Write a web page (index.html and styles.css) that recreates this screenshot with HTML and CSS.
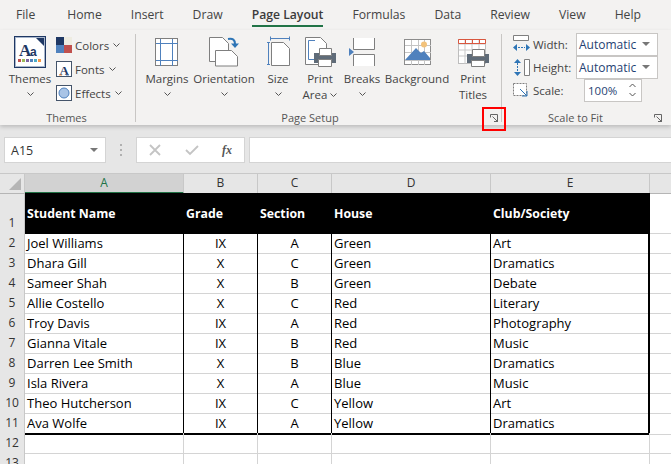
FILE: index.html
```html
<!DOCTYPE html>
<html lang="en">
<head>
<meta charset="utf-8">
<title>Page Layout</title>
<link rel="stylesheet" href="styles.css">
</head>
<body>
<nav class="tabs">
  <span class="tab tab-file">File</span><span class="tab">Home</span><span class="tab">Insert</span><span class="tab">Draw</span>
  <span class="tab active">Page Layout</span><span class="tab">Formulas</span><span class="tab">Data</span><span class="tab">Review</span><span class="tab">View</span><span class="tab">Help</span>
</nav>
<section class="ribbon">
  <div class="group g-themes">
    <div class="group-body themes-body">
      <div class="big w-themes">
        <svg class="ico" width="32" height="32" viewBox="0 0 32 32"><rect x=".5" y=".5" width="31" height="31" fill="#fff" stroke="#1f3864"/><rect x="1.5" y="1.5" width="29" height="29" fill="#fff" stroke="#a9b7cc"/><path d="M22 2h8v8z" fill="#1f3864"/><text x="5" y="20" class="aa1">A</text><text x="16" y="20" class="aa2">a</text><path d="M4 23h3v3H4z" fill="#c0504d"/><path d="M8 23h3v3H8z" fill="#9bbb59"/><path d="M12 23h3v3h-3z" fill="#8064a2"/><path d="M16 23h3v3h-3z" fill="#4f81bd"/><path d="M20 23h3v3h-3z" fill="#4bacc6"/><path d="M24 23h3v3h-3z" fill="#f79646"/></svg>
        <span class="big-label">Themes</span>
        <svg class="chev" width="7" height="4" viewBox="0 0 7 4"><path d="M.5.5l3 3 3-3" fill="none" stroke="#555"/></svg>
      </div>
      <div class="small-col">
        <div class="small"><svg width="16" height="16" viewBox="0 0 16 16"><path d="M0 0h8v8H0z" fill="#1f3864"/><path d="M8 0h8v8H8z" fill="#eeece1"/><path d="M0 8h8v8H0z" fill="#4f81bd"/><path d="M8 8h8v8H8z" fill="#c0504d"/></svg><span>Colors</span><svg class="chev" width="7" height="4" viewBox="0 0 7 4"><path d="M.5.5l3 3 3-3" fill="none" stroke="#555"/></svg></div>
        <div class="small"><svg width="16" height="16" viewBox="0 0 16 16"><rect x=".5" y=".5" width="15" height="15" fill="#fff" stroke="#44546a"/><text x="3.500" y="13.500" class="fonta">A</text><path d="M3 14h3" stroke="#f79646"/><path d="M10 14h3" stroke="#4f81bd"/></svg><span>Fonts</span><svg class="chev" width="7" height="4" viewBox="0 0 7 4"><path d="M.5.5l3 3 3-3" fill="none" stroke="#555"/></svg></div>
        <div class="small"><svg width="16" height="16" viewBox="0 0 16 16"><rect x=".5" y=".5" width="15" height="15" fill="#fff" stroke="#44546a"/><circle cx="8" cy="8" r="5" fill="#a9c4e6" stroke="#4f81bd"/></svg><span>Effects</span><svg class="chev" width="7" height="4" viewBox="0 0 7 4"><path d="M.5.5l3 3 3-3" fill="none" stroke="#555"/></svg></div>
      </div>
    </div>
    <div class="group-label">Themes</div>
  </div>

  <div class="group g-setup">
    <div class="group-body setup-body">
      <div class="big w-margins">
        <svg class="ico" width="24" height="32" viewBox="0 0 24 32"><rect x=".5" y="2.500" width="22" height="27" fill="#fff" stroke="#7f7f7f"/><path d="M5.500 3v27M17.500 3v27M1 7.500h22M1 24.500h22" stroke="#4f81bd" fill="none"/></svg>
        <span class="big-label">Margins</span>
        <svg class="chev" width="7" height="4" viewBox="0 0 7 4"><path d="M.5.5l3 3 3-3" fill="none" stroke="#555"/></svg>
      </div>
      <div class="big w-orient">
        <svg class="ico" width="30" height="32" viewBox="0 0 30 32"><path d="M.5 1.500h13l6 6v18H.5z" fill="#fff" stroke="#7f7f7f"/><path d="M6.500 14.500h16l6 6v9.500h-22z" fill="#fff" stroke="#7f7f7f"/><path d="M19 3c5-1 7 1 7 5" fill="none" stroke="#2e75b6" stroke-width="2"/><path d="M22 7.500h8l-4 4.500z" fill="#2e75b6"/></svg>
        <span class="big-label">Orientation</span>
        <svg class="chev" width="7" height="4" viewBox="0 0 7 4"><path d="M.5.5l3 3 3-3" fill="none" stroke="#555"/></svg>
      </div>
      <div class="big w-size">
        <svg class="ico" width="23" height="32" viewBox="0 0 23 32"><path d="M3.500 2.500h19M3.500.5v4M22.500.5v4M0 6.500h3M0 28.500h3M1.500 6.500v22" fill="none" stroke="#4f81bd"/><path d="M4.500 6.500h12l6 6v17h-18z" fill="#fff" stroke="#7f7f7f"/></svg>
        <span class="big-label">Size</span>
        <svg class="chev" width="7" height="4" viewBox="0 0 7 4"><path d="M.5.5l3 3 3-3" fill="none" stroke="#555"/></svg>
      </div>
      <div class="big w-print">
        <svg class="ico" width="31" height="32" viewBox="0 0 31 32"><path d="M.5 1.500h15l6 6v21H.5z" fill="#fff" stroke="#7f7f7f"/><path d="M10 4.500H3.500v19H10" fill="none" stroke="#4f81bd"/><path d="M9 17h22v10H9z" fill="#5f6b78"/><path d="M14.500 12.500h12v7h-12z" fill="#fff" stroke="#7f7f7f"/><path d="M13.500 23.500h13v7h-13z" fill="#fff" stroke="#7f7f7f"/></svg>
        <span class="big-label">Print</span>
        <span class="big-label">Area<svg class="chev inl" width="7" height="4" viewBox="0 0 7 4"><path d="M.5.5l3 3 3-3" fill="none" stroke="#555"/></svg></span>
      </div>
      <div class="big w-breaks">
        <svg class="ico" width="26" height="32" viewBox="0 0 26 32"><path d="M4.500 2v11.500h21V2" fill="#fff" stroke="#7f7f7f"/><path d="M4.500 30v-11.500h21V30" fill="#fff" stroke="#7f7f7f"/><path d="M0 12l5 4-5 4z" fill="#4f81bd"/></svg>
        <span class="big-label">Breaks</span>
        <svg class="chev" width="7" height="4" viewBox="0 0 7 4"><path d="M.5.5l3 3 3-3" fill="none" stroke="#555"/></svg>
      </div>
      <div class="big w-bg">
        <svg class="ico" width="27" height="32" viewBox="0 0 27 32"><rect x=".5" y="3.500" width="26" height="25" fill="#fff" stroke="#8c8c8c"/><path d="M1 9.500h26M1 16.500h26M1 24.500h26M7.500 4v25M14.500 4v25M20.500 4v25" stroke="#c4c4c4"/><circle cx="20" cy="8.500" r="3" fill="#f2c27b"/><path d="M1 24l11-12 5 5 3-2 6 7v2H1z" fill="#4f81bd"/></svg>
        <span class="big-label">Background</span>
      </div>
      <div class="big w-titles">
        <svg class="ico" width="31" height="32" viewBox="0 0 31 32"><rect x=".5" y="3.500" width="27" height="24" fill="#fff" stroke="#bdbdbd"/><path d="M1 8h27M7 4v24M14 4v24M21 4v24M1 14h27M1 20h27" stroke="#c9c9c9"/><path d="M.5 3.500h27v4H.5zM7.500 3.500v4M14.500 3.500v4M21.500 3.500v4" fill="none" stroke="#d9573f"/><path d="M9 18h22v9H9z" fill="#5f6b78"/><path d="M14.500 13.500h12v7h-12z" fill="#fff" stroke="#7f7f7f"/><path d="M13.500 24.500h13v6h-13z" fill="#fff" stroke="#7f7f7f"/></svg>
        <span class="big-label">Print</span>
        <span class="big-label">Titles</span>
      </div>
    </div>
    <div class="group-label label-setup">Page Setup
      <svg class="launcher" width="8" height="8" viewBox="0 0 8 8"><path d="M.5 3.500V.5h7v7h-3.500M2.500 2.500l5 5M7.500 4v3.500H4" fill="none" stroke="#666"/></svg>
    </div>
  </div>

  <div class="group g-scale">
    <div class="group-body scale-body">
      <div class="scale-row">
        <svg width="17" height="18" viewBox="0 0 17 18"><path d="M.5.500h15v5H.5z" fill="#fff" stroke="#7f7f7f"/><path d="M5 12.500h7" stroke="#2e75b6" stroke-dasharray="2 1"/><path d="M0 12.500l4-3.500v7zM17 12.500l-4-3.500v7z" fill="#2e75b6"/></svg>
        <span class="scale-label">Width:</span>
        <div class="select"><span>Automatic</span><i class="caret"></i></div>
      </div>
      <div class="scale-row">
        <svg width="17" height="17" viewBox="0 0 17 17"><path d="M11.500.5h5v16h-5z" fill="#fff" stroke="#7f7f7f"/><path d="M4.500 4v9" stroke="#2e75b6" stroke-dasharray="2 1"/><path d="M4.500 0l3.500 4H1zM4.500 17l3.500-4H1z" fill="#2e75b6"/></svg>
        <span class="scale-label">Height:</span>
        <div class="select"><span>Automatic</span><i class="caret"></i></div>
      </div>
      <div class="scale-row">
        <svg width="17" height="17" viewBox="0 0 17 17"><path d="M.5 1.500h13v12H.5z" fill="#fff" stroke="#7f7f7f" stroke-dasharray="2 1"/><path d="M7 7l7 7M14 9v5H9" fill="none" stroke="#2e75b6"/></svg>
        <span class="scale-label">Scale:</span>
        <div class="spin"><span>100%</span><svg width="7" height="14" viewBox="0 0 7 14"><path d="M.5 4l3-3 3 3M.5 10l3 3 3-3" fill="none" stroke="#555"/></svg></div>
      </div>
    </div>
    <div class="group-label label-scale">Scale to Fit
      <svg class="launcher" width="8" height="8" viewBox="0 0 8 8"><path d="M.5 3.500V.5h7v7h-3.500M2.500 2.500l5 5M7.500 4v3.500H4" fill="none" stroke="#666"/></svg>
    </div>
  </div>
</section>

<section class="formula">
  <div class="namebox"><span>A15</span><i class="caret"></i></div>
  <div class="grip"><i></i><i></i><i></i></div>
  <div class="fx-box">
    <svg width="12" height="12" viewBox="0 0 12 12"><path d="M1 1l10 10M11 1L1 11" stroke="#c4c4c4" stroke-width="1.800"/></svg>
    <svg width="14" height="12" viewBox="0 0 14 12"><path d="M1 6l4 4 8-8" fill="none" stroke="#c4c4c4" stroke-width="1.800"/></svg>
    <span class="fx">fx</span>
  </div>
  <div class="fx-input"></div>
</section>

<section class="sheet">
  <div class="row r-head"><div class="corner"><i></i></div><div class="ch sel">A</div><div class="ch">B</div><div class="ch">C</div><div class="ch">D</div><div class="ch">E</div><div class="ch blank"></div></div>
  <div class="row r-title"><div class="rh">1</div><div class="th">Student Name</div><div class="th">Grade</div><div class="th">Section</div><div class="th">House</div><div class="th">Club/Society</div><div class="c"></div></div>
  <div class="row"><div class="rh">2</div><div class="d">Joel Williams</div><div class="d m">IX</div><div class="d m">A</div><div class="d">Green</div><div class="d e">Art</div><div class="c"></div></div>
  <div class="row"><div class="rh">3</div><div class="d">Dhara Gill</div><div class="d m">X</div><div class="d m">C</div><div class="d">Green</div><div class="d e">Dramatics</div><div class="c"></div></div>
  <div class="row"><div class="rh">4</div><div class="d">Sameer Shah</div><div class="d m">X</div><div class="d m">B</div><div class="d">Green</div><div class="d e">Debate</div><div class="c"></div></div>
  <div class="row"><div class="rh">5</div><div class="d">Allie Costello</div><div class="d m">X</div><div class="d m">C</div><div class="d">Red</div><div class="d e">Literary</div><div class="c"></div></div>
  <div class="row"><div class="rh">6</div><div class="d">Troy Davis</div><div class="d m">IX</div><div class="d m">A</div><div class="d">Red</div><div class="d e">Photography</div><div class="c"></div></div>
  <div class="row"><div class="rh">7</div><div class="d">Gianna Vitale</div><div class="d m">IX</div><div class="d m">B</div><div class="d">Red</div><div class="d e">Music</div><div class="c"></div></div>
  <div class="row"><div class="rh">8</div><div class="d">Darren Lee Smith</div><div class="d m">X</div><div class="d m">B</div><div class="d">Blue</div><div class="d e">Dramatics</div><div class="c"></div></div>
  <div class="row"><div class="rh">9</div><div class="d">Isla Rivera</div><div class="d m">X</div><div class="d m">A</div><div class="d">Blue</div><div class="d e">Music</div><div class="c"></div></div>
  <div class="row"><div class="rh">10</div><div class="d">Theo Hutcherson</div><div class="d m">IX</div><div class="d m">C</div><div class="d">Yellow</div><div class="d e">Art</div><div class="c"></div></div>
  <div class="row r-last"><div class="rh">11</div><div class="d">Ava Wolfe</div><div class="d m">IX</div><div class="d m">A</div><div class="d">Yellow</div><div class="d e">Dramatics</div><div class="c"></div></div>
  <div class="row"><div class="rh">12</div><div class="c"></div><div class="c"></div><div class="c"></div><div class="c"></div><div class="c"></div><div class="c"></div></div>
  <div class="row"><div class="rh">13</div><div class="c"></div><div class="c"></div><div class="c"></div><div class="c"></div><div class="c"></div><div class="c"></div></div>
</section>

<div class="redbox"></div>
</body>
</html>
```

FILE: styles.css
```css
* { box-sizing: border-box; }
html, body { margin: 0; height: 100%; }
body {
  position: relative;
  width: 671px;
  height: 464px;
  overflow: hidden;
  background: #e6e6e6;
  font-family: "Open Sans", "Noto Sans", sans-serif;
  font-size: 11.5px;
  color: #444;
}

/* Tabs */
.tabs {
  display: flex;
  gap: 29px;
  height: 30px;
  padding-left: 16px;
  background: #f3f2f1;
  font-size: 12.2px;
  line-height: 30px;
}
.tab { position: relative; white-space: nowrap; color: #444; }
.tab-file { margin-right: 3px; }
.tab.active { font-weight: 600; color: #3b3b3b; }
.tab.active::after {
  content: "";
  position: absolute;
  left: 0; right: 0; bottom: 3px;
  height: 2px;
  background: #217346;
}

/* Ribbon */
.ribbon {
  display: flex;
  height: 95px;
  background: #f3f2f1;
  box-shadow: 0 2px 4px rgba(0,0,0,.18);
  position: relative;
}
.group { display: flex; flex-direction: column; position: relative; padding-top: 6px; }
.group::after {
  content: "";
  position: absolute;
  right: 0; top: 4px; bottom: 3px;
  width: 1px;
  background: #c8c6c4;
}
.g-scale { padding-top: 3px; }
.g-scale::after { display: none; }
.g-themes { width: 136px; padding-right: 3px; }
.g-setup { width: 366px; }
.g-scale { width: 169px; }
.group-body { display: flex; flex: 1; min-height: 0; }
.group-label {
  position: relative;
  height: 15px;
  line-height: 16px;
  text-align: center;
  font-size: 11px;
  color: #555;
}
.label-setup { padding-right: 18px; }
.label-scale { padding-right: 22px; }
.launcher { position: absolute; right: 4px; top: 4px; }
.label-scale .launcher { right: 9px; }

.themes-body { padding-left: 9px; }
.setup-body { padding-left: 5px; }
.big { display: flex; flex-direction: column; align-items: center; line-height: 16px; }
.ico { margin-bottom: 3px; flex: none; }
.big-label { white-space: nowrap; color: #444; }
.chev { margin-top: 5px; }
.chev.inl { margin: 0 0 2px 3px; }
.w-themes { width: 42px; }
.w-margins { width: 52px; }
.w-orient { width: 62px; }
.w-size { width: 46px; }
.w-print { width: 38px; }
.w-breaks { width: 46px; }
.w-bg { width: 64px; }
.w-titles { width: 48px; }
.small-col { display: flex; flex-direction: column; gap: 8px; margin-left: 5px; padding-top: 1px; }
.small { display: flex; align-items: center; gap: 3px; height: 16px; white-space: nowrap; }
.small .chev { margin: 0 0 0 1px; }
.aa1 { font: 700 17px "Liberation Serif", serif; fill: #1f3864; }
.aa2 { font: 700 12px "Liberation Sans", sans-serif; fill: #1f3864; }
.fonta { font: 700 13px "Liberation Serif", serif; fill: #1f3864; }

/* Scale to fit */
.scale-body { flex-direction: column; padding-left: 11px; gap: 1px; }
.scale-row { display: flex; align-items: center; height: 22px; }
.scale-label { width: 44px; margin-left: 2px; padding-left: 1px; }
.select, .spin {
  display: flex;
  align-items: center;
  justify-content: space-between;
  height: 23px;
  font-size: 12px;
  background: #fff;
  border: 1px solid #c8c6c4;
  color: #1f3f73;
}
.select { width: 82px; padding: 0 7px 0 2px; }
.spin { width: 58px; margin-left: 8px; padding: 0 5px 0 3px; font-size: 11.5px; }
.caret {
  display: block;
  width: 0; height: 0;
  border-left: 4px solid transparent;
  border-right: 4px solid transparent;
  border-top: 4px solid #777;
}

/* Formula bar */
.formula {
  display: flex;
  align-items: flex-start;
  height: 48px;
  padding-top: 12px;
  padding-left: 4px;
}
.formula > div { height: 26px; }
.namebox {
  display: flex;
  align-items: center;
  justify-content: space-between;
  width: 102px;
  padding: 0 7px 0 6px;
  background: #fff;
  border: 1px solid #d4d4d4;
}
.namebox span { font-size: 12.5px; color: #333; }
.formula .grip { display: flex; flex-direction: column; justify-content: center; gap: 3px; width: 30px; align-items: center; }
.grip i { width: 2px; height: 2px; background: #b0b0b0; }
.fx-box {
  display: flex;
  align-items: center;
  justify-content: space-between;
  width: 109px;
  padding: 0 12px;
  background: #fff;
  border: 1px solid #d4d4d4;
}
.fx { font: italic 700 12px "Liberation Serif", serif; color: #555; }
.fx-input { flex: 1; margin-left: 4px; background: #fff; border: 1px solid #d4d4d4; border-right: 0; }

/* Sheet */
.sheet { border-top: 1px solid #c8c8c8; }
.row {
  display: grid;
  grid-template-columns: 25px 159px 74px 74px 159px 159px 22px;
  height: 20px;
  background: #fff;
}
.r-head { height: 19px; background: #e6e6e6; }
.r-title { height: 40px; }
.corner { position: relative; background: #e6e6e6; border-bottom: 1px solid #b5b5b5; border-right: 1px solid #c8c8c8; }
.corner i {
  position: absolute;
  right: 3px; bottom: 3px;
  width: 0; height: 0;
  border-left: 12px solid transparent;
  border-bottom: 12px solid #b5b5b5;
}
.ch {
  text-align: center;
  line-height: 18px;
  font-size: 12px;
  color: #333;
  background: #e6e6e6;
  border-right: 1px solid #c8c8c8;
  border-bottom: 1px solid #b5b5b5;
}
.ch.sel { background: #d2d2d2; color: #217346; border-bottom: 2px solid #217346; }
.ch.blank { border-right: 0; }
.rh {
  text-align: center;
  line-height: 20px;
  font-size: 12px;
  color: #333;
  background: #e6e6e6;
  border-right: 1px solid #c8c8c8;
  border-bottom: 1px solid #c8c8c8;
}
.r-title .rh { padding-top: 20px; }
.th {
  background: #000;
  color: #fff;
  font-weight: 700;
  font-size: 12.3px;
  line-height: 38px;
  padding: 2px 0 0 2px;
}
.d {
  font-size: 13px;
  line-height: 20px;
  color: #000;
  padding-left: 2px;
  white-space: nowrap;
  border-right: 1px solid #000;
  border-bottom: 1px solid #d4d4d4;
}
.d.m { text-align: center; padding-left: 0; }
.d.e { border-right: 2px solid #000; }
.c { border-right: 1px solid #d4d4d4; border-bottom: 1px solid #d4d4d4; }
.r-last .d { border-bottom: 2px solid #000; }

/* Annotation */
.redbox {
  position: absolute;
  left: 482px; top: 107px;
  width: 24px; height: 24px;
  border: 2px solid #f00;
}
```
